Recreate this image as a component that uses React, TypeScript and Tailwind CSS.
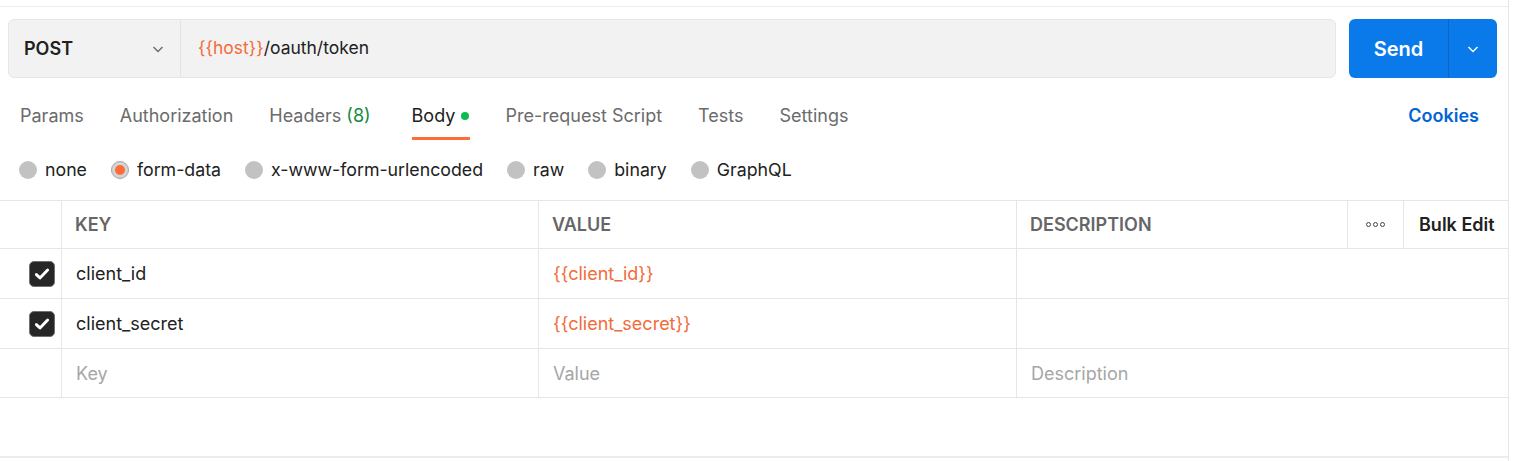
import React from 'react';

const Chevron = ({ className }: { className?: string }) => (
  <svg viewBox="0 0 16 16" className={className} fill="none" stroke="currentColor" strokeWidth="1.4">
    <path d="M3.5 6l4.5 4.5L12.5 6" />
  </svg>
);

const Check = () => (
  <div className="w-[26px] h-[26px] rounded-[5px] bg-[#262626] border border-[#707070] flex items-center justify-center">
    <svg viewBox="0 0 16 16" className="w-[18px] h-[18px]" fill="none" stroke="white" strokeWidth="2.6" strokeLinecap="round" strokeLinejoin="round">
      <path d="M3 8.5l3.2 3L13 4.5" />
    </svg>
  </div>
);

const Radio = ({ label, active }: { label: string; active?: boolean }) => (
  <div className="flex items-center gap-[8px]">
    {active ? (
      <span className="w-[18px] h-[18px] rounded-full bg-[#d4d4d4] border border-[#a6a6a6] flex items-center justify-center">
        <span className="w-[10px] h-[10px] rounded-full bg-[#ff6c37]" />
      </span>
    ) : (
      <span className="w-[18px] h-[18px] rounded-full bg-[#c2c2c2]" />
    )}
    <span className="text-[#212121]">{label}</span>
  </div>
);

const tabs = ['Params', 'Authorization'];

export default function App() {
  return (
    <div className="w-[1509px] h-[461px] bg-white border-r border-[#e6e6e6] font-['Inter',sans-serif] text-[18px] text-[#212121]">
      <div className="h-[6px]" />
      <div className="border-t border-[#ededed]" />

      {/* URL bar */}
      <div className="flex items-center gap-[13px] pl-[8px] pr-[11px] pt-[12px]">
        <div className="flex w-[1328px] h-[59px] bg-[#f2f2f2] border border-[#e6e6e6] rounded-[6px] shrink-0">
          <div className="w-[172px] flex items-center justify-between pl-[15px] pr-[14px] border-r border-[#e3e3e3]">
            <span className="font-semibold text-[18px] text-[#212121]">POST</span>
            <Chevron className="w-[16px] h-[16px] text-[#6b6b6b]" />
          </div>
          <div className="flex items-center pl-[17px] text-[17.5px]">
            <span className="text-[#f26b3a]">{'{{host}}'}</span>
            <span>/oauth/token</span>
          </div>
        </div>
        <div className="flex w-[148px] h-[59px] bg-[#0a7aeb] rounded-[6px] text-white shrink-0">
          <div className="w-[100px] flex items-center justify-center border-r border-[#0867c9] font-semibold text-[20px]">Send</div>
          <div className="flex-1 flex items-center justify-center">
            <Chevron className="w-[16px] h-[16px]" />
          </div>
        </div>
      </div>

      {/* Tabs */}
      <div className="flex items-start justify-between pl-[20px] pr-[29px] pt-[24px] h-[61px]">
        <div className="flex gap-[36px] text-[#6b6b6b]">
          {tabs.map((t) => (
            <span key={t}>{t}</span>
          ))}
          <span>
            Headers <span className="text-[#168a3e]">(8)</span>
          </span>
          <div className="flex flex-col items-start ml-[5px]">
            <div className="flex items-center gap-[6px] text-[#212121]">
              Body
              <span className="w-[8px] h-[8px] rounded-full bg-[#0cbb52]" />
            </div>
            <div className="mt-[8px] h-[3px] w-[58px] bg-[#ff6c37]" />
          </div>
          <span>Pre-request Script</span>
          <span>Tests</span>
          <span>Settings</span>
        </div>
        <span className="text-[#0265d2] font-semibold">Cookies</span>
      </div>

      {/* Body types */}
      <div className="flex items-center gap-[24px] pl-[19px] pt-[1px] h-[61px] text-[17.75px]">
        <Radio label="none" />
        <Radio label="form-data" active />
        <Radio label="x-www-form-urlencoded" />
        <Radio label="raw" />
        <Radio label="binary" />
        <Radio label="GraphQL" />
      </div>

      {/* Table */}
      <div className="border-t border-[#e6e6e6]">
        <div className="flex h-[48px] border-b border-[#e6e6e6] font-semibold text-[#666666]">
          <div className="w-[62px] border-r border-[#e6e6e6]" />
          <div className="w-[477px] border-r border-[#e6e6e6] flex items-center pl-[13px]">KEY</div>
          <div className="w-[478px] border-r border-[#e6e6e6] flex items-center pl-[13px]">VALUE</div>
          <div className="w-[331px] border-r border-[#e6e6e6] flex items-center pl-[13px]">DESCRIPTION</div>
          <div className="w-[56px] border-r border-[#e6e6e6] flex items-center justify-center gap-[2px]">
            <span className="w-[5px] h-[5px] rounded-full border border-[#444]" />
            <span className="w-[5px] h-[5px] rounded-full border border-[#444]" />
            <span className="w-[5px] h-[5px] rounded-full border border-[#444]" />
          </div>
          <div className="flex-1 flex items-center pl-[15px] text-[#212121]">Bulk Edit</div>
        </div>

        {[
          ['client_id', '{{client_id}}'],
          ['client_secret', '{{client_secret}}'],
        ].map(([k, v]) => (
          <div key={k} className="flex h-[50px] border-b border-[#e6e6e6]">
            <div className="w-[62px] border-r border-[#e6e6e6] flex items-center justify-end pr-[6px]">
              <Check />
            </div>
            <div className="w-[477px] border-r border-[#e6e6e6] flex items-center pl-[14px]">{k}</div>
            <div className="w-[478px] border-r border-[#e6e6e6] flex items-center pl-[14px] text-[#f26b3a]">{v}</div>
            <div className="flex-1" />
          </div>
        ))}

        <div className="flex h-[49px] border-b border-[#e6e6e6] text-[#a6a6a6]">
          <div className="w-[62px] border-r border-[#e6e6e6]" />
          <div className="w-[477px] border-r border-[#e6e6e6] flex items-center pl-[14px]">Key</div>
          <div className="w-[478px] border-r border-[#e6e6e6] flex items-center pl-[14px]">Value</div>
          <div className="flex-1 flex items-center pl-[14px]">Description</div>
        </div>
      </div>

      <div className="h-[58px]" />
      <div className="border-t-2 border-[#ededed]" />
    </div>
  );
}
